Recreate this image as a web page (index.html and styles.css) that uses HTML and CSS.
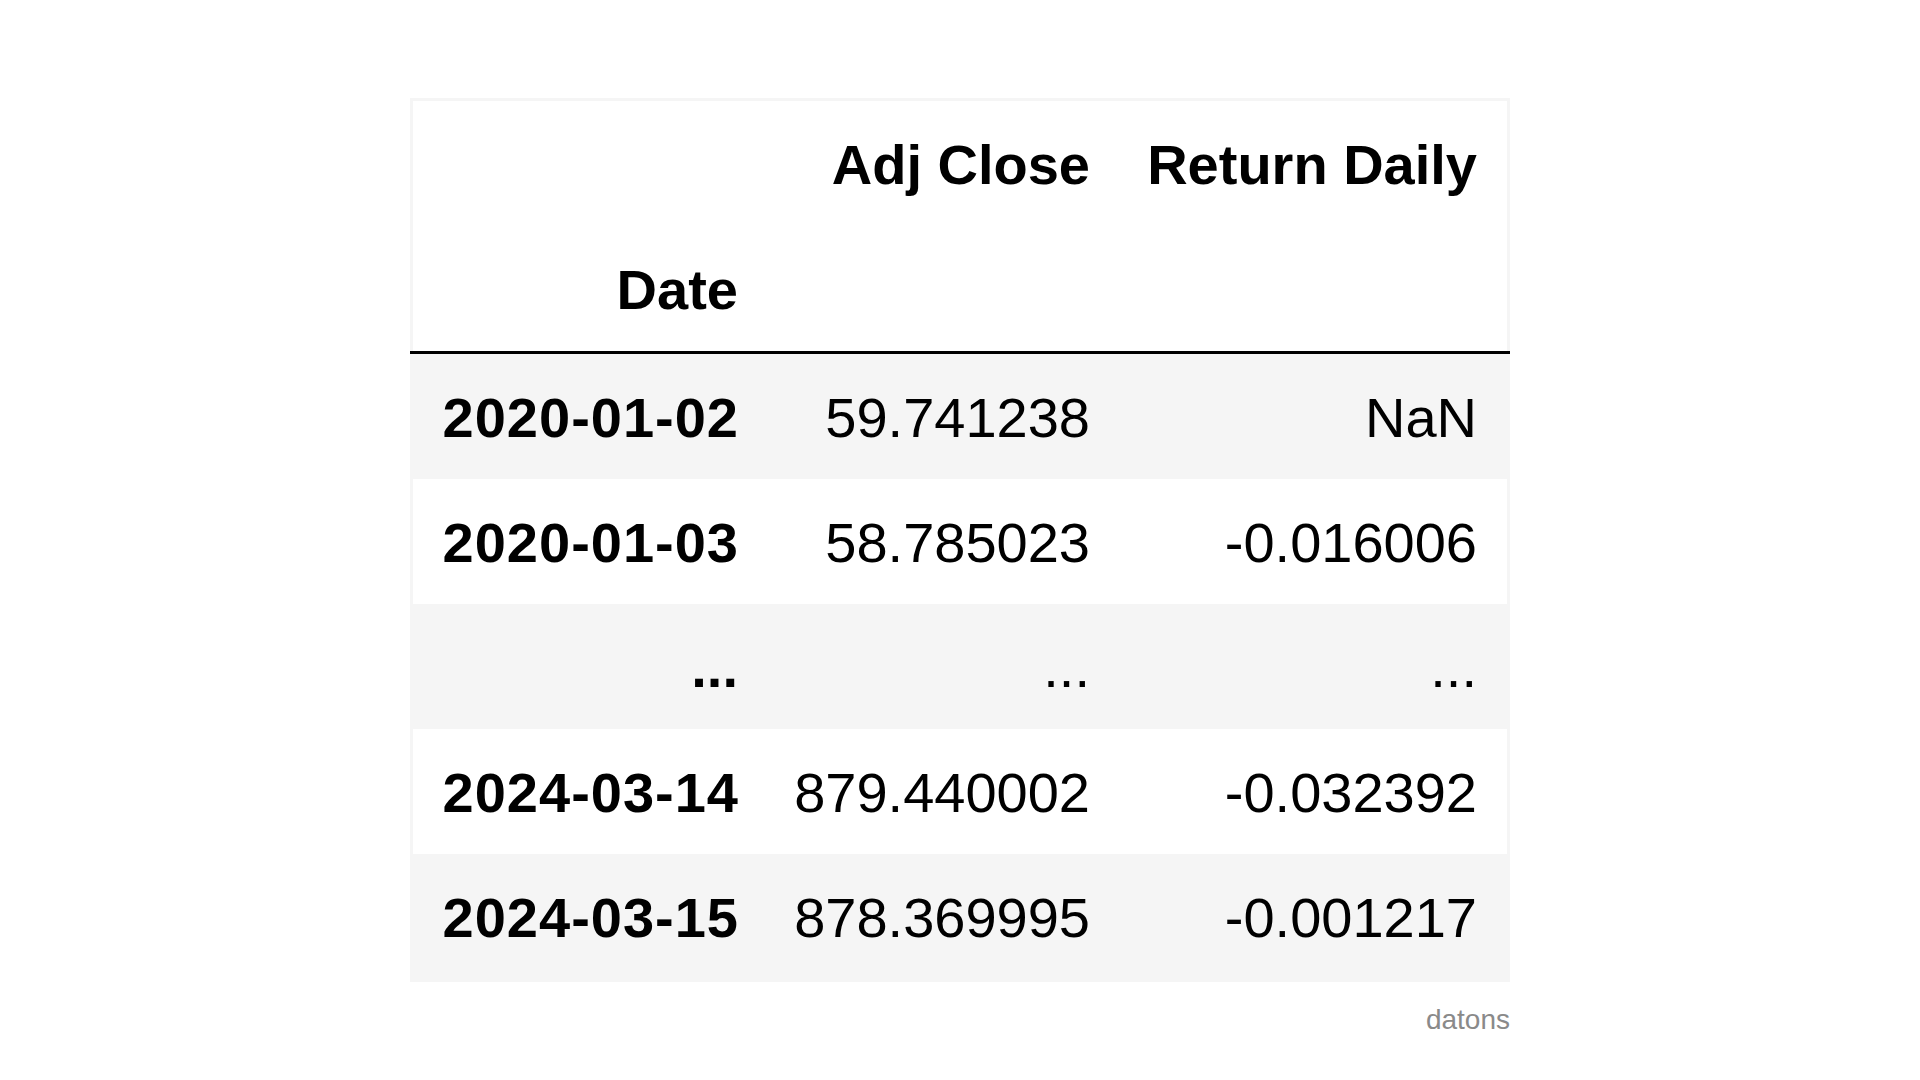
FILE: index.html
```html
<!DOCTYPE html>
<html lang="en">
<head>
<meta charset="utf-8">
<title>DataFrame</title>
<link rel="stylesheet" href="styles.css">
</head>
<body>
<div class="frame">
  <div class="head">
    <div class="row">
      <div class="cell th"></div>
      <div class="cell th">Adj Close</div>
      <div class="cell th">Return Daily</div>
    </div>
    <div class="row">
      <div class="cell th">Date</div>
      <div class="cell th"></div>
      <div class="cell th"></div>
    </div>
  </div>
  <div class="rule"></div>
  <div class="body">
    <div class="row odd">
      <div class="cell th idx">2020-01-02</div>
      <div class="cell">59.741238</div>
      <div class="cell">NaN</div>
    </div>
    <div class="row even">
      <div class="cell th idx">2020-01-03</div>
      <div class="cell">58.785023</div>
      <div class="cell">-0.016006</div>
    </div>
    <div class="row odd">
      <div class="cell th">...</div>
      <div class="cell">...</div>
      <div class="cell">...</div>
    </div>
    <div class="row even">
      <div class="cell th idx">2024-03-14</div>
      <div class="cell">879.440002</div>
      <div class="cell">-0.032392</div>
    </div>
    <div class="row odd">
      <div class="cell th idx">2024-03-15</div>
      <div class="cell">878.369995</div>
      <div class="cell">-0.001217</div>
    </div>
  </div>
</div>
<div class="credit">datons</div>
</body>
</html>
```

FILE: styles.css
```css
html, body {
  margin: 0;
  padding: 0;
  background: #ffffff;
}

body {
  font-family: "Liberation Sans", Arial, Helvetica, sans-serif;
  color: #000000;
}

.frame {
  box-sizing: border-box;
  width: 1100px;
  margin: 98px auto 0;
  padding: 3px;
  background: #f5f5f5;
}

.head {
  background: #ffffff;
}

.rule {
  height: 3px;
  margin: 0 -3px;
  background: #000000;
}

.row {
  display: grid;
  grid-template-columns: 355px 352px 387px;
  height: 125px;
}

.row.odd {
  background: #f5f5f5;
}

.row.even {
  background: #ffffff;
}

.cell {
  display: flex;
  align-items: center;
  justify-content: flex-end;
  padding: 3px 30px 0;
  font-size: 56px;
  line-height: 1.15;
  white-space: nowrap;
}

.th {
  font-weight: bold;
}

.idx {
  letter-spacing: 1px;
  margin-right: -1px;
}

.credit {
  width: 1100px;
  margin: 22px auto 0;
  text-align: right;
  font-size: 28px;
  line-height: 32px;
  color: #8a8a8a;
}
```
